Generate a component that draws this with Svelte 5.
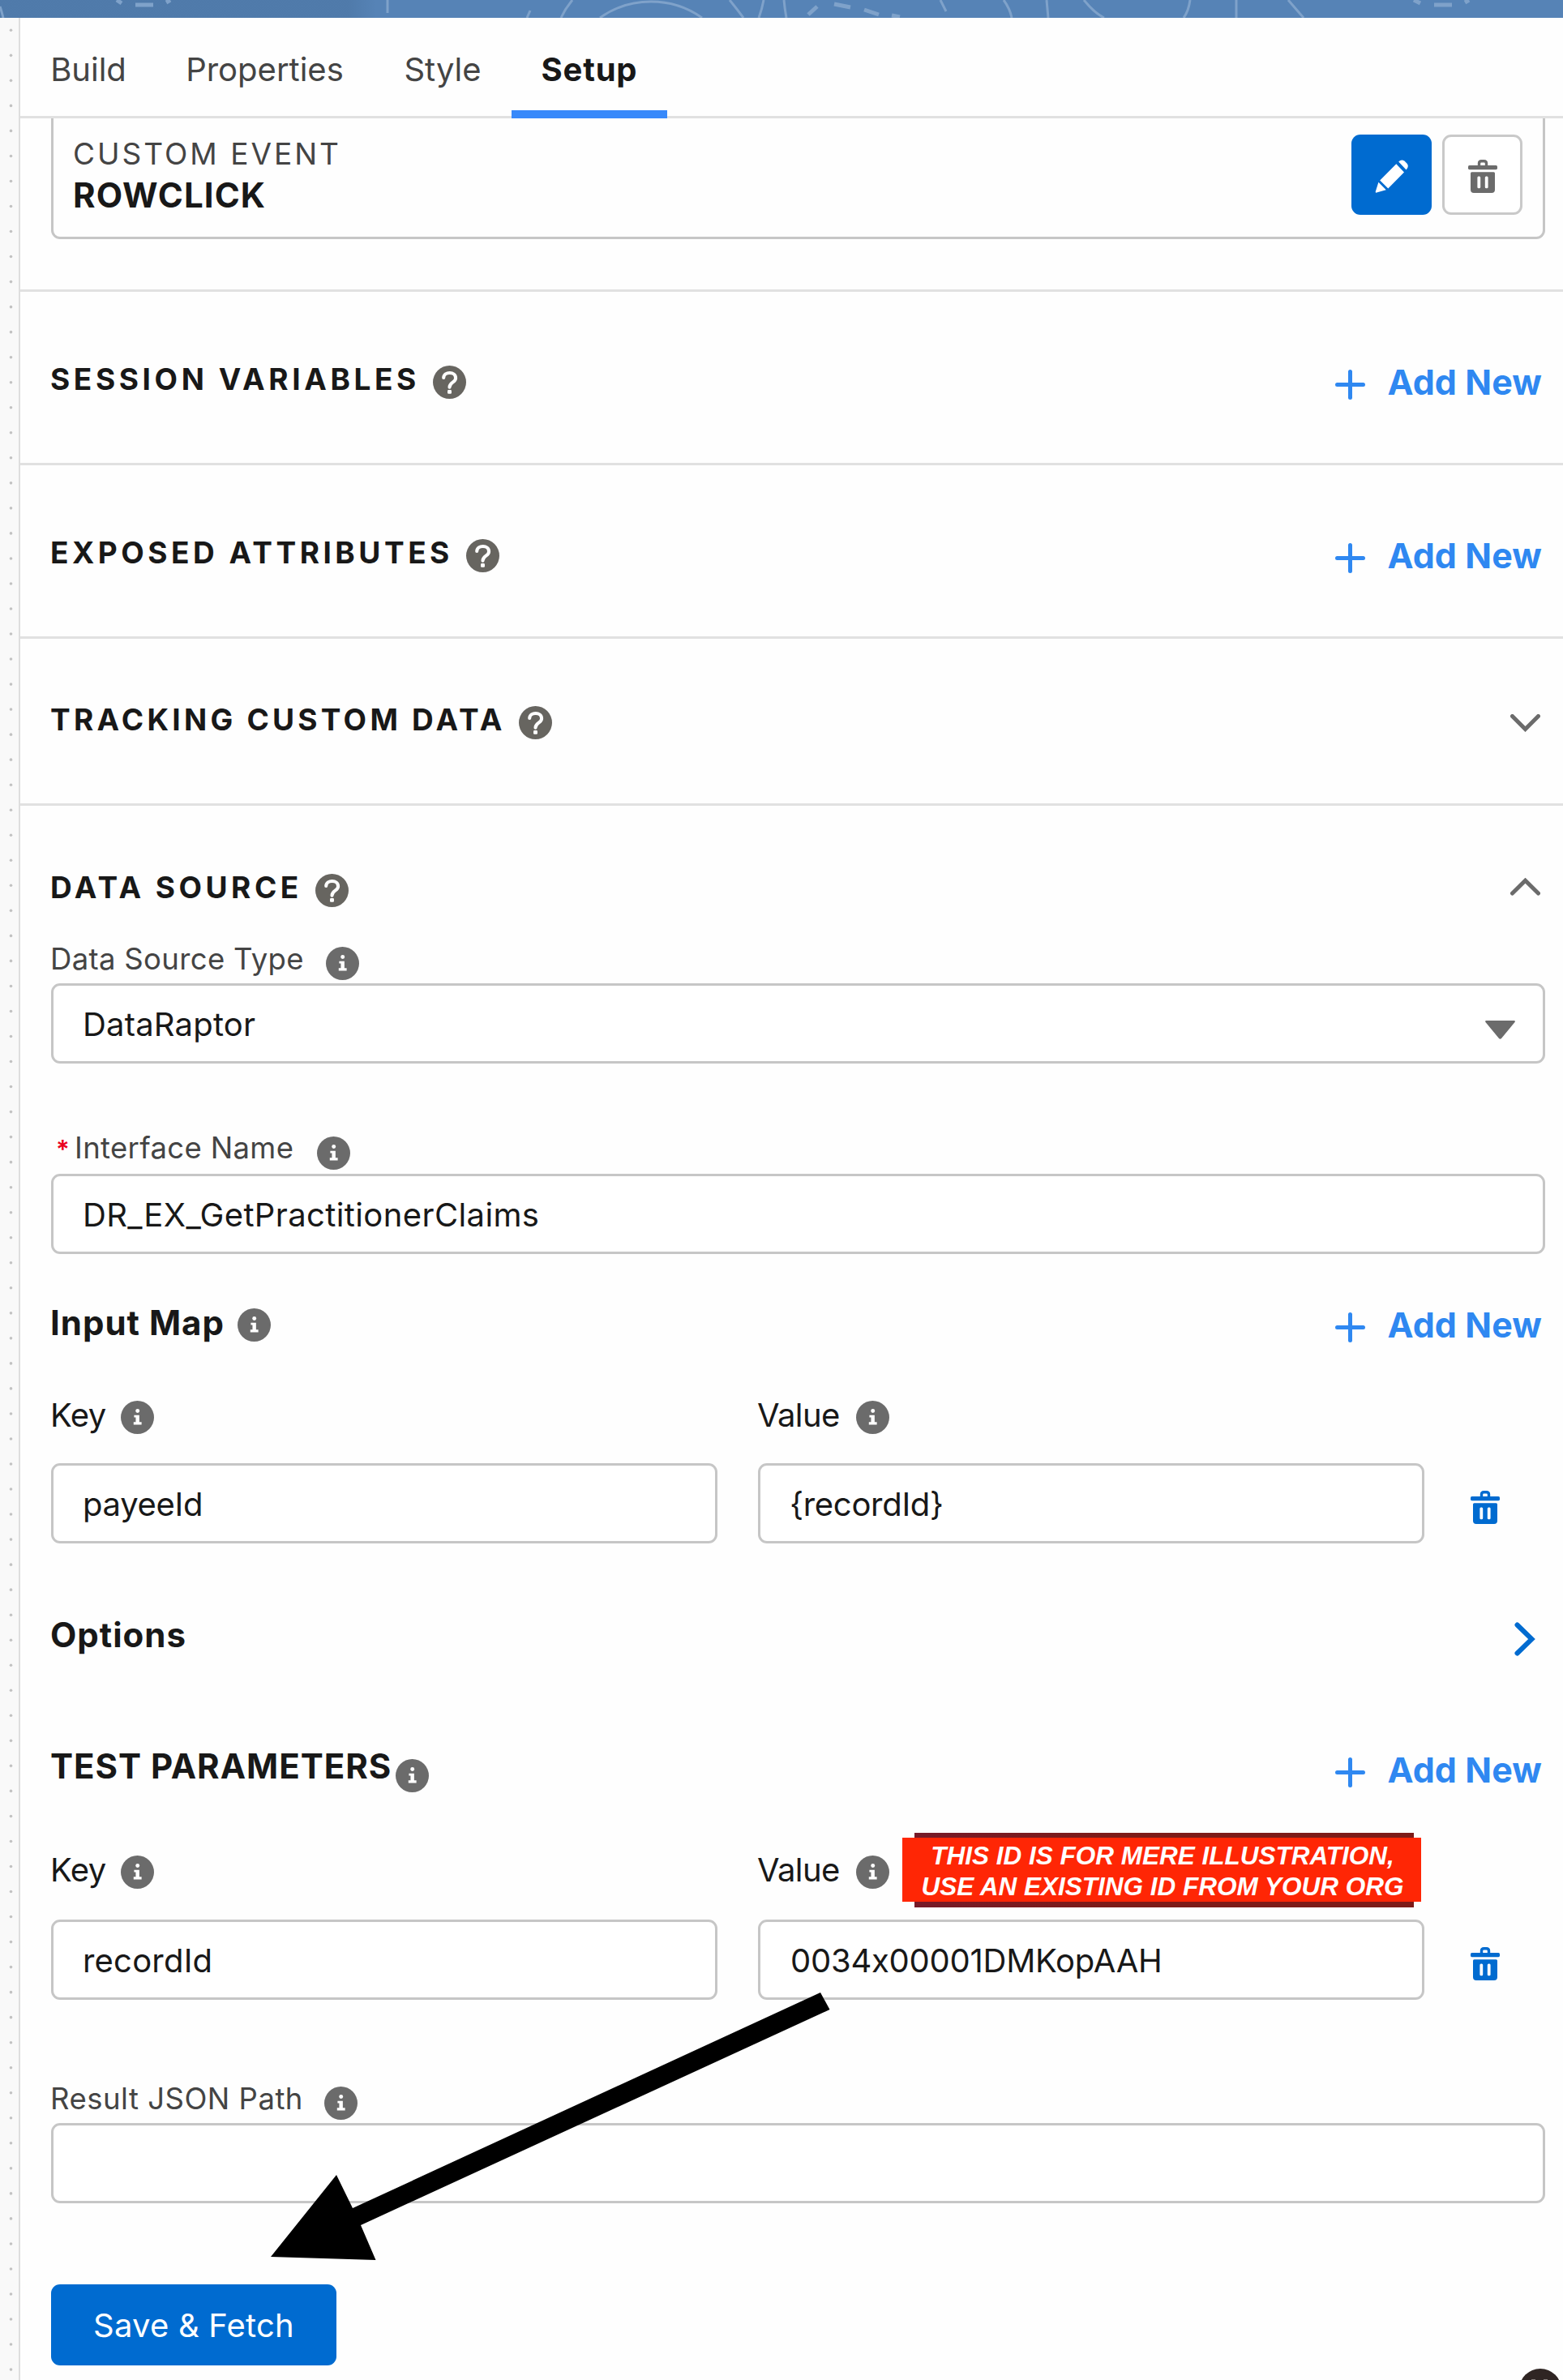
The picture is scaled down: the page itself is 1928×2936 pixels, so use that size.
<script>
  const tabs = [
    { label: 'Build', cls: 'build' },
    { label: 'Properties', cls: 'properties' },
    { label: 'Style', cls: 'style' },
    { label: 'Setup', cls: 'setup' }
  ];
  const dots = Array.from({ length: 94 }, (_, i) => 15.3 + i * 31.03);
</script>

{#snippet help()}
  <svg class="badge help" viewBox="0 0 40 40">
    <circle cx="20" cy="20" r="20" fill="#676560" />
    <path d="M12.9 14.6C13.2 6.8 27.4 6.800 27.4 15C27.4 20.4 20 20 20 26" fill="none" stroke="#fff" stroke-width="4" stroke-linecap="round" />
    <rect x="17.6" y="29.200" width="4.800" height="4.800" rx="1.200" fill="#fff" />
  </svg>
{/snippet}

{#snippet info(cls)}
  <svg class="badge {cls}" viewBox="0 0 40 40">
    <circle cx="20" cy="20" r="20" fill="#6b6b6b" />
    <circle cx="20.2" cy="12.2" r="2.4" fill="#fff" />
    <path d="M16 17.2H22.3V25.6H25V28.8H15.4V25.6H18V20H16Z" fill="#fff" />
  </svg>
{/snippet}

{#snippet trash()}
  <svg class="trash" viewBox="0 0 36 41">
    <path d="M13.5 8V4.6Q13.5 1.7 16.4 1.7H19.6Q22.5 1.7 22.5 4.6V8" fill="none" stroke="currentColor" stroke-width="3.4" />
    <rect x="0" y="7" width="36" height="5.2" rx="1.6" fill="currentColor" />
    <path fill="currentColor" fill-rule="evenodd" d="M4.5 15.2H31.5Q33 15.2 33 16.7V37Q33 41 29 41H7Q3 41 3 37V16.7Q3 15.2 4.5 15.2ZM12.9 20.5Q11.4 20.5 11.4 22V33.8Q11.4 35.3 12.9 35.3H13.7Q15.2 35.3 15.2 33.8V22Q15.2 20.5 13.7 20.5ZM22.3 20.5Q20.8 20.5 20.8 22V33.8Q20.8 35.3 22.3 35.3H23.1Q24.6 35.3 24.6 33.8V22Q24.6 20.5 23.1 20.5Z" />
  </svg>
{/snippet}

{#snippet addNew()}
  <a class="add">
    <svg class="plus" viewBox="0 0 37 37">
      <path d="M18.5 2.5V34.5M2.5 18.5H34.5" stroke="currentColor" stroke-width="5" stroke-linecap="round" />
    </svg>
    <span>Add New</span>
  </a>
{/snippet}

<div class="page">
  <header>
    <svg class="pattern" viewBox="0 0 1928 22">
      <g fill="none" stroke="#7fa2ca" stroke-width="3">
        <path d="M0 8Q2 14 4 22M478 0V16M654 13L650 22M706 0Q697 11 692 22M900 0Q909 11 917 22M942 0Q940 11 936 22" />
        <path d="M740 22Q768 2 803 2Q838 2 866 22" />
        <path d="M967 0Q968 11 970 22M1160 0L1167 14M1238 0Q1246 11 1248 22M1291 0L1293 22M1337 0Q1350 16 1362 22M1468 0Q1466 14 1460 22M1525 0V22M1589 0L1608 22" />
      </g>
      <g fill="none" stroke="#7fa2ca" stroke-width="5">
        <path d="M144 0L150 4M167 6H189M205 3L210 0M997 18L1008 8M1029 5L1049 9M1066 12L1084 18M1100 19L1110 21M1744 0L1752 4M1769 6H1791M1807 3L1812 0" />
      </g>
    </svg>
  </header>

  <div class="body">
    <svg class="gutter" viewBox="0 0 23 2914">
      {#each dots as y}
        <circle cx="13.5" cy={y} r="1.8" fill="#c2c2c2" />
      {/each}
    </svg>

    <main>
      <nav>
        {#each tabs as tab}
          <div class="tab {tab.cls}">{tab.label}</div>
        {/each}
      </nav>

      <section class="events">
        <div class="card">
          <div class="card-text">
            <div class="kind">CUSTOM EVENT</div>
            <div class="event">ROWCLICK</div>
          </div>
          <div class="actions">
            <button class="edit" aria-label="Edit">
              <svg viewBox="0 0 41 41">
                <path fill="#fff" d="M26.3 5.2L36 15.5L16.3 35.4L6.2 25.5ZM29.2 2.6Q32.6-1.2 36.4 1.6L39.6 4.8Q42.4 8.4 38.6 12.4ZM4.4 27.8L13.8 37.2L2.2 40.6Q.4 41 .8 39.2Z" />
              </svg>
            </button>
            <button class="remove" aria-label="Delete">{@render trash()}</button>
          </div>
        </div>
      </section>

      <section class="band session">
        <h2>SESSION VARIABLES</h2>
        {@render help()}
        {@render addNew()}
      </section>

      <section class="band">
        <h2>EXPOSED ATTRIBUTES</h2>
        {@render help()}
        {@render addNew()}
      </section>

      <section class="band tracking">
        <h2>TRACKING CUSTOM DATA</h2>
        {@render help()}
        <svg class="chevron down" viewBox="0 0 37 22">
          <path d="M2.5 2.5L18.5 18.5L34.5 2.5" />
        </svg>
      </section>

      <section class="source">
        <div class="row">
          <h2>DATA SOURCE</h2>
          {@render help()}
          <svg class="chevron up" viewBox="0 0 37 22">
            <path d="M2.5 19L18.5 3.2L34.5 19" />
          </svg>
        </div>

        <div class="row type-label">
          <span class="label">Data Source Type</span>
          {@render info('far')}
        </div>
        <div class="input">
          <span>DataRaptor</span>
          <svg class="caret" viewBox="0 0 37 23"><path d="M1 0H36Q37.6.6 36.5 2L20 22Q18.5 23.5 17 22L.5 2Q-.6.6 1 0Z" fill="#6b6b6b" /></svg>
        </div>

        <div class="row interface-label">
          <span class="star">*</span>
          <span class="label">Interface Name</span>
          {@render info('farther')}
        </div>
        <div class="input interface"><span>DR_EX_GetPractitionerClaims</span></div>

        <div class="row map-title">
          <h3>Input Map</h3>
          {@render info('near')}
          {@render addNew()}
        </div>
        <div class="pair">
          <div class="row"><span class="field">Key</span>{@render info('key')}</div>
          <div class="row"><span class="field">Value</span>{@render info('value')}</div>
        </div>
        <div class="pair inputs">
          <div class="input"><span class="narrow">payeeId</span></div>
          <div class="input"><span class="narrow">{'{recordId}'}</span></div>
          {@render trash()}
        </div>

        <div class="row options">
          <h3>Options</h3>
          <svg class="next" viewBox="0 0 26 42"><path d="M3.5 3.5L21.5 21L3.5 38.5" /></svg>
        </div>

        <div class="row params">
          <h3>TEST PARAMETERS</h3>
          {@render info('drop')}
          {@render addNew()}
        </div>
        <div class="pair param-labels">
          <div class="row"><span class="field">Key</span>{@render info('key')}</div>
          <div class="row value-label">
            <span class="field">Value</span>{@render info('value')}
            <div class="note">
              <div class="note-face">THIS ID IS FOR MERE ILLUSTRATION,<br />USE AN EXISTING ID FROM YOUR ORG</div>
            </div>
          </div>
        </div>
        <div class="pair inputs param-inputs">
          <div class="input"><span>recordId</span></div>
          <div class="input"><span class="record">0034x00001DMKopAAH</span></div>
          {@render trash()}
        </div>

        <div class="row result-label">
          <span class="label wide">Result JSON Path</span>
          {@render info('result')}
        </div>
        <div class="input"></div>

        <button class="save">Save &amp; Fetch</button>
      </section>
    </main>
  </div>

  <svg class="arrow" viewBox="0 0 690 331">
    <path d="M678 0L689.5 21L111 287L129.5 330L0 326L81 225L101 266Z" />
  </svg>
  <svg class="bubble" viewBox="0 0 52 15">
    <circle cx="26" cy="26" r="26" fill="#2f2523" />
    <path d="M15 13.5H20M30 13.5H35" stroke="#857d7b" stroke-width="1" />
  </svg>
</div>

<style>
  :global(body) {
    margin: 0;
    background: #fff;
  }
  .page {
    position: relative;
    width: 1928px;
    height: 2936px;
    overflow: hidden;
    background: #fefefe;
    color: #181818;
    font-family: Inter, 'Liberation Sans', sans-serif;
    font-feature-settings: 'calt' 0;
    font-size: 40px;
    line-height: 44px;
  }
  .page :global(*) {
    box-sizing: border-box;
  }
  svg {
    display: block;
    flex: none;
  }
  header {
    height: 22px;
    background: linear-gradient(90deg, rgba(40, 70, 100, 0.14) 0 430px, transparent 464px), #5683b6;
  }
  .pattern {
    width: 1928px;
    height: 22px;
  }
  .body {
    display: flex;
    height: 2914px;
  }
  .gutter {
    width: 23px;
    height: 2914px;
    background: #f9f9f9;
  }
  main {
    flex: 1;
    border-left: 2px solid #dedede;
  }

  nav {
    display: flex;
    height: 124px;
    padding-left: 1px;
    border-bottom: 3px solid #e1e1e1;
  }
  .tab {
    height: 124px;
    padding-top: 4px;
    line-height: 119px;
    text-align: center;
    color: #444;
  }
  .build { width: 166px; }
  .properties { width: 269px; }
  .style { width: 170px; }
  .setup {
    width: 192px;
    font-weight: 700;
    letter-spacing: 0.8px;
    color: #181818;
    border-bottom: 10px solid #3789fa;
  }

  .events {
    height: 214px;
    padding: 0 22px 0 38px;
    border-bottom: 3px solid #e1e1e1;
  }
  .card {
    display: flex;
    justify-content: space-between;
    height: 149px;
    padding: 18px 25px 0 24px;
    border: 3px solid #c6c6c6;
    border-top: 0;
    border-radius: 0 0 11px 11px;
  }
  .kind {
    font-size: 37px;
    line-height: 51px;
    letter-spacing: 3px;
    color: #444;
  }
  .event {
    font-size: 42px;
    line-height: 51px;
    font-weight: 700;
    letter-spacing: 1.1px;
  }
  .actions {
    display: flex;
    gap: 13px;
    padding-top: 2px;
  }
  button {
    margin: 0;
    padding: 0;
    border: 0;
    font: inherit;
  }
  .actions button {
    display: flex;
    align-items: center;
    justify-content: center;
    width: 99px;
    height: 99px;
    border-radius: 11px;
  }
  .edit {
    background: #006bd0;
  }
  .edit svg {
    width: 41px;
    height: 41px;
    margin-top: 3px;
  }
  .actions .remove {
    background: #fff;
    border: 3px solid #c9c9c9;
    color: #6b6b6b;
  }
  .remove svg {
    margin-top: 3px;
  }
  .trash {
    width: 36px;
    height: 41px;
  }

  .band {
    display: flex;
    height: 214px;
    padding: 86px 26px 0 38px;
    border-bottom: 3px solid #e1e1e1;
  }
  .band.tracking {
    height: 206px;
    padding-top: 78px;
    padding-right: 28px;
  }
  h2 {
    margin: 0 0 0 -1px;
    font-size: 37px;
    line-height: 44px;
    font-weight: 700;
    letter-spacing: 4.5px;
  }
  .session h2 {
    letter-spacing: 4.6px;
  }
  .tracking h2 {
    letter-spacing: 4.25px;
  }
  .badge {
    width: 41px;
    height: 41px;
    margin-top: 4px;
  }
  .help {
    margin-left: 16px;
    margin-top: 5px;
  }
  .far {
    margin-left: 27px;
    margin-top: 7px;
  }
  .farther {
    margin-left: 29px;
    margin-top: 8px;
  }
  .result {
    margin-left: 26px;
    margin-top: 7px;
  }
  .near {
    margin-left: 16px;
  }
  .key {
    margin-left: 18px;
  }
  .value {
    margin-left: 20px;
  }
  .drop {
    margin-left: 5px;
    margin-top: 13px;
  }
  .add {
    display: flex;
    margin-left: auto;
    padding-top: 3px;
    color: #2f88f1;
    font-size: 43px;
    font-weight: 700;
    letter-spacing: 0.1px;
  }
  .plus {
    width: 37px;
    height: 37px;
    margin: 7px 27px 0 0;
  }
  .chevron {
    width: 37px;
    height: 22px;
    margin: 15px 0 0 auto;
    fill: none;
    stroke: #6b6b6b;
    stroke-width: 5;
    stroke-linecap: round;
  }
  .up {
    margin: 10px 6px 0 auto;
  }

  .source {
    padding: 79px 22px 0 38px;
  }
  .row {
    display: flex;
    height: 44px;
  }
  .row .add {
    margin-right: 4px;
    padding-top: 1px;
  }
  .label {
    margin-left: -1px;
    font-size: 36.5px;
    letter-spacing: 0.33px;
    color: #444;
  }
  .label.wide {
    letter-spacing: 0.5px;
  }
  .type-label {
    margin: 44px 0 8px;
  }
  .input {
    display: flex;
    align-items: center;
    justify-content: space-between;
    height: 99px;
    padding: 3px 34px 0 36px;
    border: 3px solid #c6c6c6;
    border-radius: 11px;
    background: #fff;
    letter-spacing: 0.2px;
  }
  .caret {
    width: 37px;
    height: 23px;
    margin-top: 13px;
  }
  .interface {
    letter-spacing: 0.38px;
  }
  .narrow {
    letter-spacing: -0.3px;
  }
  .record {
    letter-spacing: -0.25px;
    padding-left: 1px;
  }
  .interface-label {
    margin: 82px 0 10px;
  }
  .star {
    width: 25px;
    padding: 2px 0 0 6px;
    margin-right: 5px;
    font-size: 31px;
    font-weight: 600;
    color: #ea001e;
  }
  h3 {
    margin: 0 0 0 -1px;
    font-size: 42px;
    line-height: 44px;
    font-weight: 700;
    letter-spacing: 1px;
  }
  .map-title {
    margin: 63px 0 70px;
  }
  .map-title .add {
    padding-top: 2px;
  }
  .pair {
    display: grid;
    grid-template-columns: 822px 822px auto;
    column-gap: 50px;
  }
  .field {
    margin-left: -1px;
    letter-spacing: -0.6px;
  }
  .inputs {
    margin-top: 37px;
    color: #181818;
  }
  .inputs > .trash {
    margin: 34px 0 0 7px;
    color: #006bd0;
  }
  .options {
    margin-top: 91px;
  }
  .next {
    width: 26px;
    height: 42px;
    margin: 6px 12px 0 auto;
    fill: none;
    stroke: #006bd0;
    stroke-width: 6;
    stroke-linecap: round;
  }
  .params {
    margin-top: 118px;
  }
  .row.params .add {
    padding-top: 4px;
  }
  .param-labels {
    margin-top: 84px;
  }
  .param-inputs {
    margin-top: 39px;
  }
  .value-label {
    position: relative;
  }
  .note {
    position: absolute;
    left: 193px;
    top: -24px;
    width: 616px;
    height: 92px;
    background: linear-gradient(90deg, #761a28, #7d1b18 40%);
  }
  .note-face {
    position: absolute;
    left: -15px;
    top: 6px;
    width: 640px;
    height: 79px;
    padding: 4px 0 0 2px;
    background: #ff2605;
    color: #fff;
    text-align: center;
    white-space: nowrap;
    font: italic 700 31.5px/37.5px 'Liberation Sans', sans-serif;
  }
  .result-label {
    margin: 100px 0 8px;
  }
  .save {
    display: block;
    width: 352px;
    height: 100px;
    margin-top: 100px;
    padding-top: 1px;
    border-radius: 11px;
    background: #006bd0;
    color: #fff;
    letter-spacing: 0.2px;
  }
  .arrow {
    position: absolute;
    left: 334px;
    top: 2458px;
    width: 690px;
    height: 331px;
  }
  .bubble {
    position: absolute;
    left: 1874px;
    top: 2922px;
    width: 52px;
    height: 15px;
  }
</style>
